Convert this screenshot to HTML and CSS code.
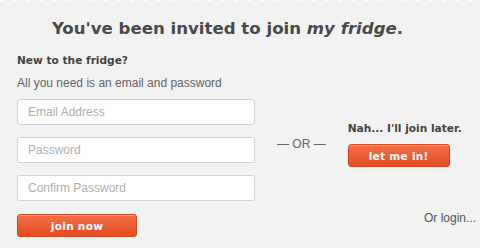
FILE: index.html
```
<!DOCTYPE html>
<html lang="en">
<head>
    <meta charset="UTF-8">
    <title>Join my fridge</title>
    <link rel="stylesheet" href="styles.css">
</head>
<body>
    <div class="page">
        <h1>You've been invited to join <em>my fridge</em>.</h1>

        <div class="main">
            <form class="signup">
                <h3>New to the fridge?</h3>
                <p>All you need is an email and password</p>
                <input type="text" class="field" placeholder="Email Address">
                <input type="password" class="field" placeholder="Password">
                <input type="password" class="field" placeholder="Confirm Password">
                <button type="button" class="button join">join now</button>
            </form>

            <div class="or">&mdash; OR &mdash;</div>

            <div class="side">
                <div class="later">
                    <h3>Nah... I'll join later.</h3>
                    <button type="button" class="button letin">let me in!</button>
                </div>
                <a href="#" class="login">Or login...</a>
            </div>
        </div>
    </div>
</body>
</html>
```

FILE: styles.css
```
html, body {
    margin: 0;
    padding: 0;
}
body {
    background-color: #f1f2f1;
    font-family: 'Liberation Sans', Arial, sans-serif;
    color: #555;
    width: 480px;
    height: 248px;
    overflow: hidden;
}
.page {
    height: 248px;
    box-sizing: border-box;
    background-image: repeating-linear-gradient(90deg, #fff 0 4px, transparent 4px 13px);
    background-size: 100% 1px;
    background-repeat: no-repeat;
}
h1 {
    margin: 0;
    padding: 17px 25px 0 0;
    text-align: center;
    font-family: 'DejaVu Sans', sans-serif;
    font-weight: bold;
    font-size: 16.6px;
    line-height: 24px;
    color: #4a4a4a;
}
h1 em {
    font-style: italic;
}
.main {
    display: flex;
    padding-left: 17px;
}
.signup {
    width: 238px;
    margin: 0;
}
.signup h3,
.later h3 {
    margin: 12px 0 0;
    font-family: 'DejaVu Sans', sans-serif;
    font-size: 10.6px;
    line-height: 14px;
    font-weight: bold;
    color: #444;
}
.signup p {
    margin: 9px 0 0;
    font-size: 12px;
    line-height: 14px;
    color: #666;
}
.field {
    display: block;
    box-sizing: border-box;
    width: 238px;
    height: 26px;
    margin-top: 12px;
    padding: 0 10px;
    background: #fff;
    border: 1px solid #d2d3d2;
    border-radius: 3px;
    font-family: 'Liberation Sans', Arial, sans-serif;
    font-size: 12px;
    color: #555;
    outline: none;
}
.field:first-of-type {
    margin-top: 9px;
}
.field::placeholder {
    color: #b0b0b0;
}
.button {
    display: block;
    border: 1px solid #d9471d;
    border-radius: 3px;
    background: linear-gradient(#f4704a, #e44c20);
    color: #fff;
    font-family: 'DejaVu Sans', sans-serif;
    font-weight: bold;
    font-size: 10.5px;
    letter-spacing: 0.3px;
    padding: 0;
    box-shadow: inset 0 1px 0 rgba(255, 255, 255, 0.25);
    cursor: pointer;
}
.join {
    width: 120px;
    height: 23px;
    margin-top: 13px;
}
.or {
    margin: 96px 0 0 22px;
    font-size: 12px;
    line-height: 14px;
    color: #666;
}
.side {
    flex: 1;
    display: flex;
    flex-direction: column;
    padding-right: 4px;
}
.later {
    margin: 80px 0 0 22px;
}
.later h3 {
    margin: 0;
}
.letin {
    width: 102px;
    height: 23px;
    margin-top: 9px;
}
.login {
    margin-top: auto;
    margin-bottom: 12px;
    align-self: flex-end;
    font-size: 12px;
    color: #555;
    text-decoration: none;
}
```
